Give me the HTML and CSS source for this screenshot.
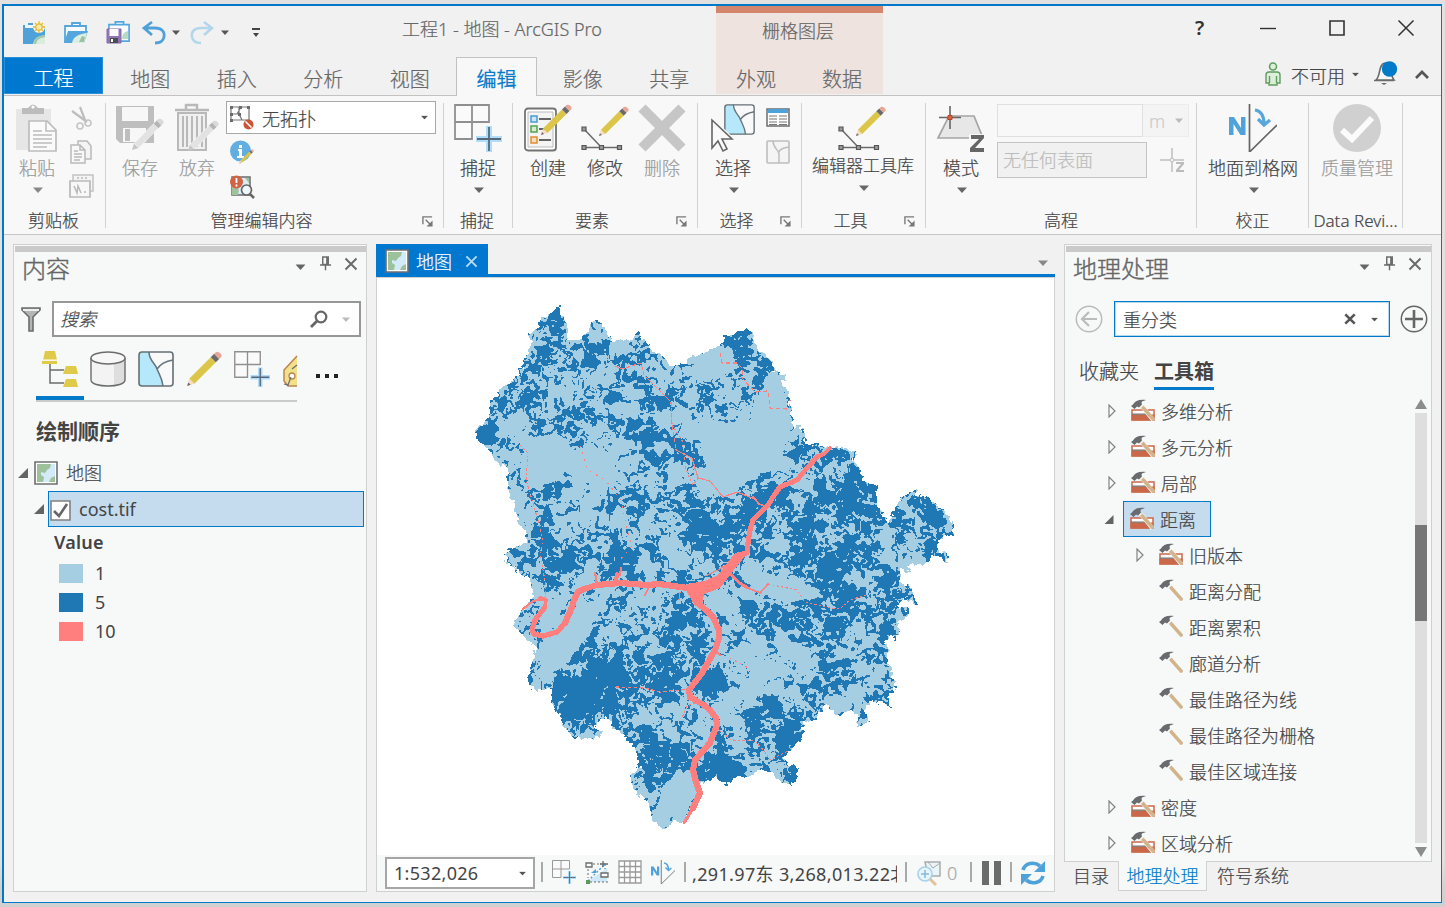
FILE: index.html
```html
<!DOCTYPE html>
<html lang="zh-CN">
<head>
<meta charset="utf-8">
<title>工程1 - 地图 - ArcGIS Pro</title>
<link rel="stylesheet" href="styles.css">
</head>
<body>
<svg class="defs" width="0" height="0" aria-hidden="true">
  <symbol id="down" viewBox="0 0 10 6"><path d="M0 .5h10L5 6z"/></symbol>
  <symbol id="pencil" viewBox="0 0 32 32">
    <path d="M1 31l2-6.500 4.500 4.500z" fill="#f6dcc4"/><path d="M1 31l1-3 2 2z" fill="#6a6a6a"/>
    <path d="M3 24.500L22 5.500l4.500 4.500L7.500 29z" fill="#dcc64a"/>
    <path d="M22 5.500l3-3L29.500 7l-3 3z" fill="#6a6a6a"/><path d="M25 2.500l1.500-1.500q2-1 4 1t.5 3.500L29.500 7z" fill="#e6a797"/>
  </symbol>
  <symbol id="greypencil" viewBox="0 0 32 32">
    <path d="M1 31l2-6.500 4.500 4.500z" fill="#c6c6c6"/><path d="M3 24.500L22 5.500l4.500 4.500L7.500 29z" fill="#e2e2e2" stroke="#f8f8f8" stroke-width=".6"/>
    <path d="M22 5.500l3-3L29.500 7l-3 3z" fill="#b5b5b5"/><path d="M25 2.500l1.500-1.500q2-1 4 1t.5 3.500L29.500 7z" fill="#d9d9d9"/>
  </symbol>
  <symbol id="snap" viewBox="0 0 48 48">
    <path d="M1 1h34v17H18v17H1zM18 1v17M1 18h17" fill="#fafafa" stroke="#8f8f8f" stroke-width="1.800"/>
    <path d="M35 22v26M22 35h26" stroke="#b0dcf8" stroke-width="6"/><path d="M35 23v24M23 35h24" stroke="#56697a" stroke-width="1.800"/>
  </symbol>
  <symbol id="mapicon" viewBox="0 0 24 24">
    <path d="M1 1h22v22H1z" fill="#fff" stroke="#6f6f6f" stroke-width="1.600"/><path d="M3 3h18v18H3z" fill="#9cc19b"/>
    <path d="M17 3h4v12l-4 2-2 4H9l1-5-3-2v-3l4 1 2-3 3-2z" fill="#d3eaf8"/>
  </symbol>
  <symbol id="partition" viewBox="0 0 36 36">
    <rect x="1" y="1" width="34" height="34" rx="3" fill="#f9f9f9"/>
    <path d="M4 1h7c0 9 9 13 10 21l4 13H4q-3 0-3-3V4q0-3 3-3z" fill="#b4e8fa"/>
    <path d="M11 1c0 9 7 12 8 17 3 7 5 9 6 17M19 18c4-6 10-8 16-9" fill="none" stroke="#69757c" stroke-width="1.600"/>
    <rect x="1" y="1" width="34" height="34" rx="3" fill="none" stroke="#666f74" stroke-width="1.600"/>
  </symbol>
  <symbol id="modify" viewBox="0 0 48 48">
    <path d="M3 25l17.500 18.500M3 43.500h35" stroke="#6a6a6a" stroke-width="1.500" fill="none"/>
    <path d="M1 23h4v4H1zM1 41.500h4v4H1zM18.500 41.500h4v4h-4zM36.500 41.500h4v4h-4z" fill="#999" stroke="#555" stroke-width="1.200"/>
    <use href="#pencil" x="17" y="2" width="31" height="31"/>
  </symbol>
  <symbol id="hammer" viewBox="0 0 24 24">
    <path d="M10 9l2.500-2.500L24 19.500q0 2.500-2.500 2.500z" fill="#d2b48c"/>
    <path d="M0 7l2-1.500C4 2 8 0 15 1l-4 1.500q-1 1 0 3l-3 3-2-1-2.500 2.500z" fill="#696c6e"/>
  </symbol>
  <symbol id="toolbox" viewBox="0 0 24 24">
    <path d="M1 11h22v10H1z" fill="#fff" stroke="#cb6849" stroke-width="1.500"/><path d="M.5 15.500h23V21.500H.5z" fill="#cb6849"/><path d="M1 14.500h18v1.300H1z" fill="#77706d"/>
    <path d="M8 7l5-1 11 14-3 3z" fill="#f6f1eb"/><use href="#hammer" width="24" height="24"/>
  </symbol>
  <symbol id="caseic" viewBox="0 0 24 24"><path d="M8 5V2h9v3M1 5h22v18H1z" fill="#f8fcff" stroke="#55a6dc" stroke-width="1.800"/></symbol>
  <symbol id="launch" viewBox="0 0 12 12"><path d="M1 9V1h10M4 4l6 6" fill="none" stroke="#777" stroke-width="1.500"/><path d="M11.500 5v6.500H5z" fill="#777"/></symbol>
  <symbol id="pin" viewBox="0 0 12 16"><path d="M3 1h6v8H3zM7.500 1v8M0 9.700h12M6 10v5.500" fill="none" stroke="#6b6b6b" stroke-width="1.600"/></symbol>
  <symbol id="cross" viewBox="0 0 14 14"><path d="M1.500 1.500l11 11M12.500 1.500l-11 11" stroke="currentColor" stroke-width="2"/></symbol>
  <symbol id="boldcross" viewBox="0 0 14 14"><path d="M1.500 1.500l11 11M12.500 1.500l-11 11" stroke="currentColor" stroke-width="3"/></symbol>
  <symbol id="northgrid" viewBox="0 0 48 48">
    <path d="M0 31V13h5l7 11V13h4.500v18h-5L4.500 20v11z" fill="#4fa3da"/><path d="M20.500 0v48L48 21" fill="none" stroke="#646464" stroke-width="1.700"/>
    <path d="M26 6c7 1 9 6 9 14M29 15l6 6 6-5" fill="none" stroke="#56a7dc" stroke-width="3.200"/>
  </symbol>
  <symbol id="closed" viewBox="0 0 8 14"><path d="M1 1v12l6-6z" fill="none" stroke="#828282" stroke-width="1.200"/></symbol>
  <symbol id="opened" viewBox="0 0 10 10"><path d="M10 0v10H0z" fill="#646464"/></symbol>
</svg>

<div class="window">
  <header class="titlebar">
    <div class="quick">
      <svg class="i24" viewBox="0 0 24 24"><path d="M1 4h5V2h5v3h12v18H1z" fill="#4ea2d9"/><path d="M3 4h8v3H3z" fill="#eef7fc"/><path d="M11 23q1-8 12-9v9z" fill="#d9ecdd"/><path d="M13 23c0-4 3-7 10-8" fill="none" stroke="#9fc6a6" stroke-width="2"/><circle cx="17" cy="6" r="6" fill="#fbf6df"/><path d="M17 0v12M11 6h12M13 2l8 8M21 2l-8 8" stroke="#dfba38" stroke-width="1.300"/><circle cx="17" cy="6" r="3.200" fill="#f8e9a8" stroke="#dfba38" stroke-width="1.200"/></svg>
      <svg class="i24" viewBox="0 0 24 24"><path d="M8 5V2h8v3M1 22V5h21v5" fill="#f5fbff" stroke="#55a6dc" stroke-width="1.800"/><path d="M4 10h20l-4 12H0z" fill="#55a6dc"/><path d="M8 22c1-6 6-9 15-10l-3 10z" fill="#dbeee2"/><path d="M15 21l3-6 3 1-1 5z" fill="#9cc1a0"/></svg>
      <svg class="i24" viewBox="0 0 24 24"><use href="#caseic" x="2" y="-1" width="22" height="22"/><path d="M16 18q0-7 6-8v8z" fill="#b9d9c0"/><path d="M1 8h14v14H1z" fill="#9175b6" stroke="#8469ad"/><path d="M3.500 8h9v7h-9z" fill="#fff"/><path d="M4 17h8v5H4z" fill="#4d4d4d"/><path d="M5 18h2v3H5z" fill="#fff"/></svg>
      <svg class="i24 undo" viewBox="0 0 24 24"><path d="M10 1L2 7l8 7M2 7h11c7 0 10 4 9 9s-5 6-9 6" fill="none" stroke="#4ea2d9" stroke-width="2.800"/></svg>
      <svg class="tiny" viewBox="0 0 10 6"><use href="#down"/></svg>
      <svg class="i24 redo" viewBox="0 0 24 24"><path d="M14 1l8 6-8 7M22 7H11C4 7 1 11 2 16s5 6 9 6" fill="none" stroke="#b3d6eb" stroke-width="2.600"/></svg>
      <svg class="tiny" viewBox="0 0 10 6"><use href="#down"/></svg>
      <svg class="custom" viewBox="0 0 8 9"><path d="M0 0h8v2H0zM1 5h6L4 9z" fill="#444"/></svg>
    </div>
    <div class="apptitle">工程1 - 地图 - ArcGIS Pro</div>
    <div class="context-title">栅格图层</div>
    <div class="sysbuttons">
      <span class="help">?</span>
      <svg width="16" height="16" viewBox="0 0 16 16"><path d="M0 8.500h16" stroke="#333" stroke-width="1.400"/></svg>
      <svg width="16" height="16" viewBox="0 0 16 16"><path d="M1 1h14v14H1z" fill="none" stroke="#333" stroke-width="1.600"/></svg>
      <svg width="16" height="16" viewBox="0 0 16 16"><path d="M.5.5l15 15m0-15l-15 15" stroke="#333" stroke-width="1.500"/></svg>
    </div>
  </header>
  <nav class="tabs">
    <a class="file">工程</a><a>地图</a><a>插入</a><a>分析</a><a>视图</a><a class="active">编辑</a><a>影像</a><a>共享</a>
    <div class="context"><a>外观</a><a>数据</a></div>
    <div class="account">
      <svg width="16" height="24" viewBox="0 0 16 24"><circle cx="8" cy="4.500" r="3.500" fill="#dcefd9" stroke="#5f9c5f" stroke-width="1.500"/><path d="M4 10h8q3 0 3 3v8H12v2H4v-2H1v-8q0-3 3-3zM4.500 14v7M11.500 14v7" fill="#dcefd9" stroke="#5f9c5f" stroke-width="1.400"/></svg>
      <span>不可用</span>
      <svg class="tiny" viewBox="0 0 10 6"><use href="#down"/></svg>
      <svg class="bell" width="24" height="24" viewBox="0 0 24 24"><path d="M2 19c5-4 2-16 9-17s5 13 9 17zM0 19.500h20" fill="#f7f7f7" stroke="#6b6b6b" stroke-width="1.600"/><path d="M7 22h6l-3 2z" fill="#6b6b6b"/><circle cx="15.500" cy="8" r="7.700" fill="#007ac9"/></svg>
      <svg width="14" height="9" viewBox="0 0 14 9"><path d="M1 8l6-6 6 6" fill="none" stroke="#555" stroke-width="2.700"/></svg>
    </div>
  </nav>

  <section class="ribbon">
    <div class="group g1">
      <div class="gbody">
        <div class="btn off"><svg class="i48" viewBox="0 0 48 48"><path d="M3 5h35v41H3z" fill="#e6e6e6"/><path d="M9 4h6q5-7 10 0h6v6H9z" fill="#bcbcbc"/><circle cx="20" cy="3" r="1.600" fill="#fff"/><path d="M16 17h18l9 9v21H16z" fill="#fafafa" stroke="#bcbcbc" stroke-width="1.700"/><path d="M33 17v10h10M20 27h9M20 31h19M20 35h19M20 39h19M20 43h14" fill="none" stroke="#bcbcbc" stroke-width="1.500"/></svg><span>粘贴</span><svg class="arr" viewBox="0 0 10 6"><use href="#down"/></svg></div>
        <div class="smalls">
          <svg class="i24" viewBox="0 0 24 24"><path d="M10 1l5 13M2 5l15 11" stroke="#bdbdbd" stroke-width="2.200"/><circle cx="18" cy="17" r="3" fill="none" stroke="#c4c4c4" stroke-width="1.600"/><circle cx="10" cy="20" r="3" fill="none" stroke="#c4c4c4" stroke-width="1.600"/></svg>
          <svg class="i24" viewBox="0 0 24 24"><path d="M8 1h9l4 5v13H8z" fill="#f4f4f4" stroke="#b9b9b9" stroke-width="1.500"/><path d="M1 5h9l5 5v13H1zM10 5v5h5M4 11h4M4 14h8M4 17h8M4 20h6" fill="#f8f8f8" stroke="#b9b9b9" stroke-width="1.500"/></svg>
          <svg class="i24" viewBox="0 0 24 24"><path d="M3 1h20v16H3z" fill="#f4f4f4" stroke="#c2c2c2" stroke-width="1.500"/><path d="M0 7h20v16H0z" fill="#f8f8f8" stroke="#b9b9b9" stroke-width="1.700"/><path d="M4 12l3 7 1-7 3 7M14 18h2M7 4h2m2 0h2m2 0h2" stroke="#b9b9b9" stroke-width="1.500" fill="none"/></svg>
        </div>
      </div>
      <div class="glabel"><span>剪贴板</span></div>
    </div>
    <div class="group g2">
      <div class="gbody">
        <div class="btn off"><svg class="i48" viewBox="0 0 48 48"><path d="M0 2h38v37H4l-4-4z" fill="#bebebe"/><path d="M6 3h26v14H6z" fill="#f7f7f7"/><path d="M7 24h23v14H7z" fill="#f7f7f7"/><path d="M9 25h5v12H9z" fill="#bebebe"/><use href="#greypencil" x="15" y="14" width="33" height="33"/></svg><span>保存</span></div>
        <div class="btn off"><svg class="i48" viewBox="0 0 48 48"><path d="M2 6h34M13 6V1h11v5" fill="none" stroke="#b9b9b9" stroke-width="2.500"/><path d="M5 9h28v37H5zM10 12v31M14 12v31M19 12v31M24 12v31M29 12v31" fill="#f0f0f0" stroke="#b9b9b9" stroke-width="2"/><use href="#greypencil" x="14" y="16" width="32" height="32"/></svg><span>放弃</span></div>
        <div class="manage">
          <div class="combo"><svg class="i24" viewBox="0 0 24 24"><path d="M1 1h18v13H1zM1 8h8M9 1v7l3 6M7 8l4-7" fill="#fff" stroke="#777" stroke-width="1.200"/><path d="M0 0h3v3H0zM9 0h3v3H9zM17 0h3v3h-3zM0 7h3v3H0zM0 13h3v3H0zM8 7h3v3H8z" fill="#6b6b6b"/><circle cx="18.500" cy="18.500" r="5" fill="#ca5535"/><path d="M15.500 15.500l6 6" stroke="#fff" stroke-width="1.500"/></svg><span>无拓扑</span><svg class="tiny" viewBox="0 0 10 6"><use href="#down"/></svg></div>
          <svg class="i24" viewBox="0 0 24 24"><circle cx="10.500" cy="11" r="10.500" fill="#62aee0"/><path d="M9 5h3v3H9zM8 9h4v7h2v2H7v-2h2v-5H8z" fill="#fff"/><use href="#pencil" x="9" y="9" width="15" height="15"/></svg>
          <svg class="i24" viewBox="0 0 24 24"><path d="M2 2h18v18H2z" fill="#d8edf6" stroke="#6b6b6b" stroke-width="1.500"/><path d="M2 8q9 3 6 12H2zM15 3h4v5z" fill="#9fc19c"/><circle cx="6.500" cy="7" r="6.500" fill="#cf6446"/><path d="M6.500 3v5M6.500 9.500v2" stroke="#fff" stroke-width="1.800"/><circle cx="16.500" cy="15" r="5" fill="#eef7fb" stroke="#666" stroke-width="1.700"/><path d="M20 19l4 4" stroke="#666" stroke-width="2.500"/></svg>
        </div>
      </div>
      <div class="glabel"><span>管理编辑内容</span><svg class="launch"><use href="#launch"/></svg></div>
    </div>
    <div class="group g3">
      <div class="gbody"><div class="btn"><svg class="i48"><use href="#snap"/></svg><span>捕捉</span><svg class="arr" viewBox="0 0 10 6"><use href="#down"/></svg></div></div>
      <div class="glabel"><span>捕捉</span></div>
    </div>
    <div class="group g4">
      <div class="gbody">
        <div class="btn"><svg class="i48" viewBox="0 0 48 48"><rect x="1" y="4.500" width="31" height="42" rx="3" fill="#fff" stroke="#737373" stroke-width="1.800"/><path d="M4 8h25v35H4z" fill="#f4f4f4" stroke="#bbb"/><path d="M15 15h12M15 25h12M15 36h12" stroke="#656565" stroke-width="2"/><path d="M7 12h6v6H7z" fill="#cde6f6" stroke="#479bd2" stroke-width="1.500"/><path d="M7 22h6v6H7z" fill="#d7ecd0" stroke="#53a353" stroke-width="1.500"/><path d="M7 33h6v6H7z" fill="#fbdfbd" stroke="#e38d35" stroke-width="1.500"/><use href="#pencil" x="16" y="0" width="32" height="32"/></svg><span>创建</span></div>
        <div class="btn"><svg class="i48"><use href="#modify"/></svg><span>修改</span></div>
        <div class="btn off"><svg class="i48" viewBox="0 0 48 48"><path d="M4 4l40 40M44 4L4 44" stroke="#c6c6c6" stroke-width="10"/></svg><span>删除</span></div>
      </div>
      <div class="glabel"><span>要素</span><svg class="launch"><use href="#launch"/></svg></div>
    </div>
    <div class="group g5">
      <div class="gbody">
        <div class="btn"><svg class="i48" viewBox="0 0 48 48"><use href="#partition" x="15" y="0" width="31" height="31"/><path d="M3 16v29l6-7 5 9 5-2-5-9h10z" fill="#fafafa" stroke="#f8f8f8" stroke-width="4"/><path d="M3 16v28l6-7 5 10 4-2-5-10h10z" fill="#fafafa" stroke="#666" stroke-width="1.600"/></svg><span>选择</span><svg class="arr" viewBox="0 0 10 6"><use href="#down"/></svg></div>
        <div class="smalls">
          <svg class="i24" viewBox="0 0 24 24"><path d="M1 3h22v17H1z" fill="#fff" stroke="#6b6b6b" stroke-width="1.500"/><path d="M2 3h20v4H2z" fill="#4ea2d9"/><path d="M3 10h8M13 10h8M3 13h8M13 13h8M3 16h8M13 16h8M3 18.500h8M13 18.500h8" stroke="#777" stroke-width="1.200"/></svg>
          <svg class="i24" viewBox="0 0 24 24"><rect x="1" y="1" width="22" height="22" rx="1" fill="#f4f4f4" stroke="#bdbdbd" stroke-width="1.600"/><path d="M7 1c0 7 6 9 6 13v9M12 13c3-5 6-5 11-6" fill="none" stroke="#bdbdbd" stroke-width="1.500"/></svg>
        </div>
      </div>
      <div class="glabel"><span>选择</span><svg class="launch"><use href="#launch"/></svg></div>
    </div>
    <div class="group g6">
      <div class="gbody"><div class="btn wide"><svg class="i48"><use href="#modify"/></svg><span>编辑器工具库</span><svg class="arr" viewBox="0 0 10 6"><use href="#down"/></svg></div></div>
      <div class="glabel"><span>工具</span><svg class="launch"><use href="#launch"/></svg></div>
    </div>
    <div class="group g7">
      <div class="gbody">
        <div class="btn"><svg class="i48" viewBox="0 0 48 48"><path d="M12 12h25l9 22H1z" fill="#e7e7e7" stroke="#a5a5a5" stroke-width="1.700"/><path d="M32 30h16v18H32z" fill="#f8f8f8"/><path d="M13 2v23M2 13.500h22" stroke="#666" stroke-width="1.600"/><path d="M11 11.500h4v4h-4z" fill="#db653e" stroke="#b94322"/><path d="M34 31h13v3L38 44h9v4H33v-4l9-9h-8z" fill="#666"/></svg><span>模式</span><svg class="arr" viewBox="0 0 10 6"><use href="#down"/></svg></div>
        <div class="fields">
          <div class="frow"><div class="f1"></div><div class="unit"><span>m</span><svg class="tiny" viewBox="0 0 10 6"><use href="#down"/></svg></div></div>
          <div class="frow"><div class="f2">无任何表面</div><svg class="i24" viewBox="0 0 24 24"><path d="M12 0v24M0 12h24" stroke="#bfbfbf" stroke-width="1.500"/><circle cx="12" cy="12" r="2" fill="#eee" stroke="#bfbfbf"/><path d="M15 13h10v12H15z" fill="#f8f8f8"/><path d="M16 14h8v2l-5 6h5v2h-8v-2l5-6h-5z" fill="#bbb"/></svg></div>
        </div>
      </div>
      <div class="glabel"><span>高程</span></div>
    </div>
    <div class="group g8">
      <div class="gbody"><div class="btn"><svg class="i48"><use href="#northgrid"/></svg><span>地面到格网</span><svg class="arr" viewBox="0 0 10 6"><use href="#down"/></svg></div></div>
      <div class="glabel"><span>校正</span></div>
    </div>
    <div class="group g9">
      <div class="gbody"><div class="btn off"><svg class="i48" viewBox="0 0 48 48"><circle cx="24" cy="24" r="24" fill="#d0d0d0"/><path d="M9 26l10 9L39 14" fill="none" stroke="#fbfbfb" stroke-width="6"/></svg><span>质量管理</span></div></div>
      <div class="glabel"><span>Data Revi...</span></div>
    </div>
  </section>

  <main class="work">
    <aside class="pane contents">
      <div class="grip"></div>
      <div class="phead"><h2>内容</h2><svg class="arr" viewBox="0 0 10 6"><use href="#down"/></svg><svg class="pin"><use href="#pin"/></svg><svg class="x"><use href="#cross"/></svg></div>
      <div class="searchrow">
        <svg width="20" height="25" viewBox="0 0 20 25"><path d="M1 1h18v2l-7 7v14H8V10L1 3z" fill="#b5b5b5" stroke="#6b6b6b" stroke-width="1.600"/><path d="M2 2h16v2H2z" fill="#eee"/></svg>
        <div class="search"><em>搜索</em><svg width="18" height="18" viewBox="0 0 18 18"><circle cx="11" cy="7" r="5.300" fill="none" stroke="#666" stroke-width="2.200"/><path d="M7 11l-6 6" stroke="#666" stroke-width="2.800"/></svg><svg class="tiny" viewBox="0 0 10 6"><use href="#down"/></svg></div>
      </div>
      <div class="views">
        <div class="viewlist">
          <svg viewBox="0 0 36 36"><path d="M8 13v19h14M8 19h14" fill="none" stroke="#6b6b6b" stroke-width="1.500"/><path d="M3 0h10l2 9H1zM0 10h15v3H0zM24 15h10l2 8H21zM24 28h10l2 8H21z" fill="#dfca4a"/><path d="M1 9h14" stroke="#faf6d8" stroke-width="1.200"/></svg>
          <svg viewBox="0 0 36 36"><path d="M1 7v22c0 8 34 8 34 0V7z" fill="#f3f3f3"/><path d="M24 12l11-4v21q0 4-11 6z" fill="#dedede"/><path d="M1 7v22c0 8 34 8 34 0V7" fill="none" stroke="#6b6b6b" stroke-width="1.400"/><ellipse cx="18" cy="7" rx="17" ry="6" fill="#f7f7f7" stroke="#6b6b6b" stroke-width="1.400"/></svg>
          <svg><use href="#partition"/></svg>
          <svg><use href="#pencil"/></svg>
          <svg><use href="#snap"/></svg>
          <svg class="half" viewBox="0 0 15 36"><path d="M15 5L2 19v11l4 5h9" fill="#f2e18a" stroke="#b98552" stroke-width="1.500"/><circle cx="10" cy="25" r="3" fill="#fff" stroke="#b98552" stroke-width="1.300"/><path d="M9 26l-3 8-4-1M10 18l5-4" fill="none" stroke="#6b6b6b" stroke-width="1.200"/></svg>
        </div>
        <svg class="dots" viewBox="0 0 24 4"><path d="M0 0h4v4H0zM9 0h4v4H9zM18 0h4v4h-4z" fill="#222"/></svg>
      </div>
      <h3>绘制顺序</h3>
      <div class="trow map"><svg class="tri"><use href="#opened"/></svg><svg class="i24"><use href="#mapicon"/></svg><span>地图</span></div>
      <div class="trow layer"><svg class="tri"><use href="#opened"/></svg><div class="sel"><svg width="21" height="21" viewBox="0 0 21 21"><path d="M1 1h19v19H1z" fill="#fff" stroke="#818181" stroke-width="1.600"/><path d="M4 11l5 5 8-12" fill="none" stroke="#666" stroke-width="2.600"/></svg><span>cost.tif</span></div></div>
      <div class="value">Value</div>
      <div class="legend"><i class="c1"></i>1</div>
      <div class="legend"><i class="c5"></i>5</div>
      <div class="legend"><i class="c10"></i>10</div>
    </aside>

    <section class="view">
      <div class="viewtabs"><div class="vtab"><svg class="i24"><use href="#mapicon"/></svg><span>地图</span><svg class="x"><use href="#cross"/></svg></div><svg class="arr" viewBox="0 0 10 6"><use href="#down"/></svg></div>
      <div class="frame">
        <canvas id="map" width="677" height="577"></canvas>
        <div class="status">
          <div class="scale"><span>1:532,026</span><svg class="tiny" viewBox="0 0 10 6"><use href="#down"/></svg></div>
          <b></b>
          <svg class="i24"><use href="#snap"/></svg>
          <svg class="i24" viewBox="0 0 24 24"><path d="M2 22L22 8v14z" fill="#cfe8f8"/><path d="M3 21L20 4M20 4h-5M20 4v5" stroke="#4ea2d9" stroke-width="1.500" stroke-dasharray="2 2"/><path d="M1 3h6v4H1zM18 1v6M15 4h8M16 13h7v4h-7z" fill="#fff" stroke="#6b6b6b" stroke-width="1.300"/><path d="M8 4h6M3 9v9M5 22h18" stroke="#6b6b6b" stroke-dasharray="2 2"/><path d="M1 20h4v4H1z" fill="#5a9b5a"/><path d="M6 13l5-4v4z" fill="#4ea2d9"/></svg>
          <svg class="i24" viewBox="0 0 24 24"><path d="M1 1h22v22H1zM1 6.500h22M1 12h22M1 17.500h22M6.500 1v22M12 1v22M17.500 1v22" fill="#fff" stroke="#9a9a9a" stroke-width="1.300"/></svg>
          <svg class="i24"><use href="#northgrid"/></svg>
          <b></b>
          <div class="coords">,291.97东 3,268,013.22北</div>
          <b></b>
          <div class="selected"><svg class="i24" viewBox="0 0 24 24"><path d="M8 1h15v14H11z" fill="#eaf5f8" stroke="#aaa" stroke-width="1.500"/><path d="M11 1l5 6 7-5" fill="none" stroke="#aaa"/><circle cx="8" cy="13" r="7" fill="#e7f5fc" stroke="#a8d1eb" stroke-width="1.600"/><path d="M8 9v8M4 13h8" stroke="#8bb9d6" stroke-width="1.500"/><path d="M13 18l6 6" stroke="#dfc39d" stroke-width="3"/></svg><span>0</span></div>
          <b></b>
          <svg class="pause" viewBox="0 0 19 24"><path d="M0 0h7v24H0zM12 0h7v24h-7z" fill="#6b6b6b"/></svg>
          <b></b>
          <svg class="i24" viewBox="0 0 24 24"><path d="M2 9C4 2 13 0 19 5M22 15C20 22 11 24 5 19" fill="none" stroke="#4ea2d9" stroke-width="3.600"/><path d="M24 0v11H13zM0 24V13h11z" fill="#4ea2d9"/></svg>
        </div>
      </div>
    </section>

    <aside class="geo">
      <div class="pane">
        <div class="grip"></div>
        <div class="phead"><h2>地理处理</h2><svg class="arr" viewBox="0 0 10 6"><use href="#down"/></svg><svg class="pin"><use href="#pin"/></svg><svg class="x"><use href="#cross"/></svg></div>
        <div class="findrow">
          <svg class="round" viewBox="0 0 28 28"><circle cx="14" cy="14" r="12.700" fill="none" stroke="#bbb" stroke-width="1.500"/><path d="M22 14H8M14 7l-7 7 7 7" fill="none" stroke="#bbb" stroke-width="2.200"/></svg>
          <div class="find"><span>重分类</span><svg class="fx"><use href="#boldcross"/></svg><svg class="tiny" viewBox="0 0 10 6"><use href="#down"/></svg></div>
          <svg class="round" viewBox="0 0 28 28"><circle cx="14" cy="14" r="12.700" fill="none" stroke="#666" stroke-width="1.500"/><path d="M14 5v18M5 14h18" stroke="#666" stroke-width="2.600"/></svg>
        </div>
        <div class="gtabs"><span>收藏夹</span><strong>工具箱</strong></div>
        <div class="treewrap">
          <div class="tree">
            <div class="node"><svg class="cl"><use href="#closed"/></svg><p><svg class="i24"><use href="#toolbox"/></svg>多维分析</p></div>
            <div class="node"><svg class="cl"><use href="#closed"/></svg><p><svg class="i24"><use href="#toolbox"/></svg>多元分析</p></div>
            <div class="node"><svg class="cl"><use href="#closed"/></svg><p><svg class="i24"><use href="#toolbox"/></svg>局部</p></div>
            <div class="node"><svg class="tri"><use href="#opened"/></svg><p class="picked"><svg class="i24"><use href="#toolbox"/></svg>距离</p></div>
            <div class="node sub"><svg class="cl"><use href="#closed"/></svg><p><svg class="i24"><use href="#toolbox"/></svg>旧版本</p></div>
            <div class="node tool"><p><svg class="i24"><use href="#hammer"/></svg>距离分配</p></div>
            <div class="node tool"><p><svg class="i24"><use href="#hammer"/></svg>距离累积</p></div>
            <div class="node tool"><p><svg class="i24"><use href="#hammer"/></svg>廊道分析</p></div>
            <div class="node tool"><p><svg class="i24"><use href="#hammer"/></svg>最佳路径为线</p></div>
            <div class="node tool"><p><svg class="i24"><use href="#hammer"/></svg>最佳路径为栅格</p></div>
            <div class="node tool"><p><svg class="i24"><use href="#hammer"/></svg>最佳区域连接</p></div>
            <div class="node"><svg class="cl"><use href="#closed"/></svg><p><svg class="i24"><use href="#toolbox"/></svg>密度</p></div>
            <div class="node"><svg class="cl"><use href="#closed"/></svg><p><svg class="i24"><use href="#toolbox"/></svg>区域分析</p></div>
          </div>
          <div class="scroll"><svg viewBox="0 0 12 10"><path d="M6 0l6 10H0z" fill="#8c8c8c"/></svg><div class="track"><div class="thumb"></div></div><svg viewBox="0 0 12 10"><path d="M0 0h12L6 10z" fill="#8c8c8c"/></svg></div>
        </div>
      </div>
      <div class="docktabs"><span>目录</span><span class="on">地理处理</span><span>符号系统</span></div>
    </aside>
  </main>
</div>
<script src="map.js"></script>
</body>
</html>
```

FILE: styles.css
```css
* { box-sizing: border-box; }
body {
  margin: 0; padding: 4px 3px 4px 2px; width: 1445px; height: 907px; overflow: hidden;
  background: linear-gradient(#e3e1e0 0, #e3e1e0 860px, #d0d0d0 890px);
  font: 300 18px "Noto Sans", "Noto Sans CJK SC", sans-serif; color: #444;
  -webkit-text-stroke: .2px currentColor;
}
svg { display: block; flex: none; overflow: visible; }
.defs { position: absolute; }
.window { width: 1440px; height: 899px; border: 2px solid #0079cb; border-width: 2px 1px 1px 2px; background: #f1f1f1; display: flex; flex-direction: column; }
.i24 { width: 24px; height: 24px; }
.i48 { width: 48px; height: 48px; }
.tiny { width: 8px; height: 5px; fill: #555; }
.arr { width: 10px; height: 6px; fill: #666; }
h2, h3, p { margin: 0; font-weight: 300; }

.titlebar { height: 51px; display: flex; flex: none; color: #666; }
.quick { width: 398px; display: flex; align-items: center; padding: 2px 0 0 18px; gap: 18px; }
.quick .undo { margin-left: -6px; }
.quick .undo + .tiny, .quick .redo + .tiny { margin-left: -12px; }
.quick .redo { margin-left: -8px; }
.quick .redo + .tiny { margin-left: -11px; }
.quick .custom { width: 8px; height: 9px; margin-left: 5px; }
.apptitle { width: 314px; line-height: 47px; white-space: nowrap; }
.context-title { width: 167px; border-top: 7px solid #d4866d; background: #eee3df; text-align: center; line-height: 37px; padding-right: 3px; }
.sysbuttons { margin-left: auto; display: flex; align-items: center; padding: 0 27px 7px 0; gap: 53px; }
.help { font: 600 20px/24px "Noto Sans", sans-serif; color: #333; width: 10px; -webkit-text-stroke: 0; margin-right: 2px; }

.tabs { height: 39px; flex: none; display: flex; border-bottom: 1px solid #c2c2c2; font-size: 20px; color: #666; }
.tabs a { width: 86.500px; text-align: center; line-height: 45px; height: 38px; }
.tabs .file { width: 99px; background: #0078d0; color: #fff; margin-right: 4px; height: 37px; border: 1px solid #2a90d8; line-height: 41px; }
.tabs .active { width: 81px; margin: 0 2.500px 0 3px; background: #f8f8f8; border: 1px solid #c2c2c2; border-bottom: 0; height: 39px; line-height: 43px; color: #0079cb; -webkit-text-stroke: .45px currentColor; }
.context { margin-left: 3px; width: 167px; height: 37px; background: #eee3df; display: flex; justify-content: center; }
.context a { width: 86px; flex: none; }
.account { margin-left: auto; padding: 0 12px 4px 0; display: flex; align-items: center; font-size: 18px; color: #444; }
.account span { margin: 2px 7px 0 10px; }
.account .tiny { width: 7px; margin-right: 15px; }
.account .bell { margin-right: 17px; margin-top: -2px; }

.ribbon { height: 139px; flex: none; display: flex; padding-top: 7px; background: #f8f8f8; border-bottom: 1px solid #c6c6c6; }
.group { height: 125px; border-right: 1px solid #d2d2d2; flex: none; }
.gbody { height: 106px; display: flex; align-items: flex-start; }
.glabel { height: 19px; line-height: 24px; font-size: 17px; display: flex; color: #444; }
.glabel span { flex: 1; text-align: center; white-space: nowrap; }
.glabel:has(.launch) span { padding-right: 5px; }
.launch { width: 11px; height: 11px; margin: 7px 10px 0 0; }
.btn { display: flex; flex-direction: column; align-items: center; padding-top: 1px; flex: none; }
.btn span { line-height: 24px; margin-top: 4px; white-space: nowrap; }
.btn .arr { margin: 7px 0 0 1px; }
.off { color: #9b9b9b; }
.off .arr { fill: #888; }
.smalls { display: flex; flex-direction: column; gap: 10px; padding-top: 3px; }
.g1 { width: 102px; padding-left: 12px; } .g1 .btn { width: 42px; } .g1 .smalls { margin-left: 12px; } .g1 .glabel { margin: 0 2px 0 -12px; }
.g2 { width: 338px; } .g2 .gbody { padding-left: 10px; } .g2 .btn { width: 48px; } .g2 .btn + .btn { margin-left: 9px; }
.manage { margin: -2px 0 0 5px; }
.manage > svg { margin: 6px 0 0 4px; } .manage > svg + svg { margin-top: 11px; }
.combo { width: 210px; height: 33px; border: 1px solid #a8a8a8; background: #fff; display: flex; align-items: center; padding: 0 7px 0 3px; }
.combo span { flex: 1; padding-left: 8px; }
.combo .tiny { width: 7px; }
.g3 { width: 69px; } .g3 .gbody { padding-left: 10px; } .g3 .glabel { margin-right: 2px; }
.g4 { width: 185px; } .g4 .gbody { padding-left: 11px; gap: 9px; }
.g5 { width: 104px; } .g5 .gbody { padding-left: 11px; gap: 9px; }
.g6 { width: 124px; } .g6 .gbody { padding-left: 10px; } .wide { width: 102px; font-size: 17px; } .wide .i48 { margin-left: -2px; } .wide span { margin-top: 2px; }
.g7 { width: 271px; } .g7 .gbody { padding-left: 11px; gap: 12px; }
.g8 { width: 112px; } .g8 .gbody { padding-left: 11px; }
.g9 { width: 94px; } .g9 .gbody { padding-left: 12px; }
.fields { padding-top: 1px; display: flex; flex-direction: column; gap: 5px; }
.frow { display: flex; align-items: center; }
.f1 { width: 146px; height: 33px; border: 1px solid #e0e0e0; }
.unit { width: 46px; height: 33px; background: #f4f4f4; border: 1px solid #ececec; border-left: 0; display: flex; align-items: center; justify-content: space-between; padding: 0 5px 0 6px; color: #ccc; }
.unit .tiny { fill: #bbb; }
.f2 { width: 150px; height: 36px; border: 1px solid #c4c4c4; background: #f1f1f1; color: #bbb; line-height: 35px; padding-left: 5px; margin-right: 13px; }

.work { flex: 1; display: flex; padding: 9px 9px 10px; }
.pane { background: #f7f9f9; border: 1px solid #d0d0d0; display: flex; flex-direction: column; }
.grip { height: 6px; flex: none; margin: 1px 0 0 1px; background: #cacaca; }
.contents { width: 354px; height: 648px; }
.phead { display: flex; align-items: flex-start; height: 49px; flex: none; padding: 0 8px; color: #666; }
.phead h2 { font-size: 24px; line-height: 33px; flex: 1; -webkit-text-stroke: .4px currentColor; }
.phead .arr { margin: 12px 14px 0 0; width: 11px; }
.pin { width: 11px; height: 15px; margin: 4px 13px 0 0; }
.x { width: 14px; height: 14px; margin-top: 5px; color: #6b6b6b; }
.searchrow { display: flex; height: 36px; align-items: center; padding-left: 7px; gap: 11px; flex: none; }
.search { width: 309px; height: 36px; border: 2px solid #979797; background: #fff; display: flex; align-items: center; padding: 0 9px 0 6px; }
.search em { flex: 1; margin-top: -2px; }
.search .tiny { margin-left: 14px; fill: #bbb; }
.views { display: flex; padding: 14px 0 0 22px; flex: none; height: 65px; }
.viewlist { width: 261px; height: 51px; border-bottom: 2px solid #cacaca; display: flex; gap: 12px; padding-left: 6px; background: linear-gradient(#007ac9, #007ac9) 0 45px / 48px 4px no-repeat; }
.viewlist svg { width: 36px; height: 36px; }
.viewlist .half { width: 15px; }
.dots { width: 24px; height: 4px; margin: 23px 0 0 19px; }
.contents h3 { font-size: 21px; line-height: 30px; font-weight: 700; padding-left: 22px; margin-top: 14px; -webkit-text-stroke: 0; }
.trow { height: 36px; display: flex; align-items: center; flex: none; }
.tri { width: 10px; height: 10px; }
.trow.map { margin-top: 9px; padding-left: 4px; } .trow.map .i24 { margin: 0 8px 0 6px; } .trow.map span { margin-top: -2px; }
.layer { padding-left: 20px; font-weight: 400; -webkit-text-stroke: 0; }
.sel { margin-left: 4px; width: 316px; height: 36px; border: 1px solid #007ac9; background: #c5dbee; display: flex; align-items: center; padding-left: 1px; gap: 8px; }
.sel svg { margin-top: 2px; }
.value { font-weight: 600; line-height: 30px; padding-left: 40px; -webkit-text-stroke: 0; letter-spacing: .2px; }
.legend { height: 29px; line-height: 29px; display: flex; align-items: center; padding-left: 45px; gap: 12px; font-weight: 400; -webkit-text-stroke: 0; margin-top: 2px; margin-bottom: -2px; flex: none; }
.legend i { width: 24px; height: 19px; }
.c1 { background: #a6cee3; } .c5 { background: #1f78b4; } .c10 { background: #ff7f7f; }

.view { width: 679px; height: 648px; margin-left: 9px; display: flex; flex-direction: column; }
.viewtabs { height: 33px; border-bottom: 3px solid #0078d0; display: flex; justify-content: space-between; }
.viewtabs > .arr { width: 12px; height: 6px; fill: #888; margin: 16px 6px 0 0; }
.vtab { width: 112px; background: #0078d0; color: #fff; display: flex; align-items: center; padding: 4px 0 0 9px; gap: 7px; }
.vtab .x { width: 13px; height: 13px; color: #b8dcf5; margin: 0 0 0 6px; }
.frame { height: 615px; border: 1px solid #d0d0d0; background: #fff; display: flex; flex-direction: column; }
#map { display: block; width: 677px; height: 577px; }
.status { height: 36px; background: #f7f8f8; display: flex; align-items: center; padding-left: 8px; }
.status b { width: 2px; height: 20px; background: #a9a9a9; margin-top: -2px; flex: none; }
.scale { width: 150px; height: 32px; border: 2px solid #a6a6a6; background: #fff; display: flex; align-items: center; justify-content: space-between; padding: 0 7px; font-weight: 400; -webkit-text-stroke: 0; letter-spacing: .3px; margin-right: 6px; }
.scale .tiny { width: 7px; }
.status b:nth-of-type(1) { margin-right: 9px; } .status > .i24 { margin-right: 9px; margin-top: -2px; }
.status b:nth-of-type(2) { margin-right: 6px; }
.coords { width: 205px; overflow: hidden; white-space: nowrap; font-weight: 400; -webkit-text-stroke: 0; letter-spacing: .35px; margin-right: 8px; }
.selected { display: flex; gap: 6px; width: 50px; margin: 0 3px 0 10px; color: #aaa; align-items: center; }
.pause { width: 19px; height: 24px; margin: 0 9px 0 10px; }
.status > .i24:last-child { margin: 0 0 0 9px; }

.geo { width: 368px; margin-left: 9px; }
.geo .pane { height: 618px; }
.geo .phead { padding-right: 9px; }
.findrow { display: flex; height: 36px; padding-left: 10px; gap: 11px; align-items: center; }
.round { width: 28px; height: 28px; }
.round:last-child { margin-left: -1px; }
.find { width: 276px; height: 36px; border: 1px solid #007ac9; box-shadow: inset 0 0 0 1px #b5d9ee; background: #fff; display: flex; align-items: center; padding: 0 11px 0 8px; }
.find span { flex: 1; }
.fx { width: 12px; height: 12px; color: #555; margin-right: 15px; }
.find .tiny { width: 7px; }
.gtabs { height: 56px; flex: none; padding: 20px 0 0 14px; display: flex; gap: 15px; font-size: 20px; line-height: 30px; }
.gtabs strong { font-weight: 700; height: 33px; border-bottom: 3px solid #007ac9; -webkit-text-stroke: 0; }
.treewrap { height: 467px; display: flex; overflow: hidden; justify-content: space-between; }
.node { height: 36px; display: flex; align-items: center; padding-left: 43px; white-space: nowrap; }
.node p { height: 36px; display: flex; align-items: center; gap: 6px; padding: 0 7px 0 6px; border: 1px solid transparent; }
.cl { width: 8px; height: 14px; margin-right: 8px; }
.node .tri { margin: 0 9px 0 -4px; height: 9px; }
.node .picked { border-color: #007ac9; background: #c5dbee; padding-right: 14px; }
.sub { padding-left: 71px; } .tool { padding-left: 87px; }
.scroll { width: 12px; margin: 6px 4px 3px 0; display: flex; flex-direction: column; justify-content: space-between; }
.scroll svg { width: 12px; height: 10px; }
.track { height: 430px; background: #dedede; padding-top: 112px; }
.thumb { height: 96px; background: #777; }
.docktabs { display: flex; padding-left: 9px; line-height: 28px; height: 30px; }
.docktabs .on { width: 89px; height: 30px; margin: -1px 10px 0 9px; border: 1px solid #d0d0d0; border-top: 0; background: #f7f9f9; color: #0079cb; text-align: center; line-height: 30px; }
```

FILE: map.js
```js
// Land-cover cost raster: class 1 and 5 patches inside the region, class 10 rivers on top.
const cv = document.getElementById('map'), W = cv.width, H = cv.height, OX = 377, OY = 278;
const ctx = cv.getContext('2d');
const outline = [557,306,552,311,547,316,537,322,538,328,534,333,527,333,531,342,526,358,517,378,502,388,491,402,489,417,477,428,475,440,487,447,497,463,507,468,507,493,512,497,517,518,520,527,527,533,527,541,507,550,505,562,520,572,528,578,533,598,518,617,512,624,523,637,535,647,534,657,531,667,527,680,535,691,551,690,552,703,560,715,565,728,575,738,598,738,602,730,595,728,602,718,610,717,614,728,623,735,635,747,640,767,632,777,633,790,648,800,652,820,664,828,673,822,684,822,700,797,698,785,702,783,713,777,720,783,730,784,735,777,750,778,758,770,770,772,780,782,793,784,798,778,797,768,787,765,784,757,795,747,802,737,804,723,817,718,823,707,827,705,835,715,850,711,857,713,858,720,857,726,870,722,862,712,873,700,890,707,887,697,893,692,898,682,891,675,888,653,884,640,893,635,895,643,900,628,897,622,909,617,907,608,898,606,903,598,917,607,916,600,912,587,900,583,900,568,910,573,908,566,927,563,933,555,947,562,948,553,938,552,937,542,953,533,950,518,945,512,927,498,915,494,917,490,908,492,902,498,888,523,877,503,877,485,862,480,860,469,853,458,857,452,843,447,830,448,822,446,805,443,803,428,795,427,790,412,790,395,783,385,784,375,773,370,772,360,758,350,752,332,743,329,735,333,723,338,720,345,703,352,690,358,680,365,672,365,660,353,652,350,648,343,637,332,630,341,612,341,608,335,600,322,592,322,588,333,578,341,568,338,567,323,562,318,560,307];
function layer(draw) {
  const c = document.createElement('canvas'); c.width = W; c.height = H;
  const g = c.getContext('2d'); g.translate(-OX, -OY); g.lineJoin = g.lineCap = 'round'; draw(g);
  return g.getImageData(0, 0, W, H).data;
}
function trace(g, p) { g.beginPath(); for (let i = 0; i < p.length; i += 2) g.lineTo(p[i], p[i + 1]); }
function hash(x, y, s) { let h = (x * 374761393 + y * 668265263 + s * 974711) | 0; h = Math.imul(h ^ (h >>> 13), 1274126177); return ((h ^ (h >>> 16)) >>> 0) / 4294967296; }
function noise(x, y, s) {
  const a = Math.floor(x), b = Math.floor(y); let u = x - a, v = y - b; u = u * u * (3 - 2 * u); v = v * v * (3 - 2 * v);
  const p = hash(a, b, s), q = hash(a + 1, b, s), r = hash(a, b + 1, s), t = hash(a + 1, b + 1, s);
  return p + (q - p) * u + (r - p) * v + (p - q - r + t) * u * v;
}
const mask = layer(g => { trace(g, outline); g.fill(); });
const open = layer(g => {
  trace(g, [696,425,790,415,792,425,787,445,770,470,745,484,724,494,700,500,690,470,706,466]); g.fill();
  trace(g, [765,378,774,370,785,380,789,412,792,425,757,425]); g.fill();
  trace(g, [690,358,722,346,734,354,738,368,725,375,700,382]); g.fill();
  trace(g, [578,603,600,600,590,635,565,665,540,682,540,642]); g.fill();
  trace(g, [703,596,722,590,733,604,724,618,706,608]); g.fill();
  trace(g, [678,770,693,772,697,790,686,818,655,820,660,790]); g.fill();
  trace(g, [540,605,566,598,558,626,539,629]); g.fill();
  trace(g, [748,553,762,572,800,580,820,590,815,600,780,602,755,590,737,575]); g.fill();
});
const rivers = layer(g => {
  g.strokeStyle = g.fillStyle = '#f00';
  const s = (w, p, d) => { g.lineWidth = w; g.setLineDash(d || []); trace(g, p); g.stroke(); };
  s(4, [830,448,825,453,817,457,807,468,797,480]);
  s(5, [817,457,807,468,797,480,780,487,775,494,768,505,753,520,750,530,748,543,747,553]);
  trace(g, [750,550,735,553,718,575,705,581,687,584,687,592,694,604,702,604,704,594,720,588,733,571]); g.fill();
  s(6, [710,583,687,588,660,584,647,585,620,583,597,585,584,589,578,592,574,600,572,607,565,623]);
  s(5, [565,623,557,632,543,636,534,634,532,630,535,620,545,607]); s(3.500, [545,607,546,600,540,598]);
  s(2, [542,599,533,601,523,609]);
  s(6, [697,592,697,603,706,610,713,617,719,630,719,638,715,650,702,673,689,690,690,697,695,700,704,705,710,710,716,718,717,725,710,743,695,760,693,770,696,782,700,793,693,808]);
  s(3, [693,808,684,823]); s(3, [730,574,741,584,748,588]); s(1.500, [748,588,760,593,768,584]);
  s(4, [616,581,617,574]); s(2, [597,584,595,573]); s(2, [620,575,621,568]); s(2, [648,589,645,595]); s(2, [715,650,720,655]);
  s(1.200, [705,576,718,570,731,562]); s(1.200, [680,592,679,600]);
  const d = [2, 3, 1, 3];
  s(1.050, [520,445,528,453,526,480,532,500,539,523,543,540,540,555,546,585,545,598], d);
  s(1.050, [615,366,622,369,641,363,644,375,659,390,671,402,672,425,676,450], [4, 2]);
  s(1.100, [676,450,692,458,698,478,710,481,723,497,737,492,757,500], [7, 1]);
  s(1.800, [753,497,759,504,768,507]); s(1.050, [672,425,682,440,686,470,693,485,698,478], d);
  s(1.050, [720,353,722,363,737,363,743,369,742,378,755,392,768,391,770,408,789,409,790,400], [4, 3]);
  s(1.050, [580,446,588,470,605,480,621,500,627,530,632,546,620,560], [1, 6]);
  s(1.050, [768,584,797,590,805,602,830,608,840,609,850,600,867,595], d);
  s(1.050, [616,687,645,688,660,692,690,689], [3, 3]); s(1.050, [695,703,687,706,682,718], d);
  s(1.050, [719,730,731,740,755,741,765,752,770,760,790,750], d); s(1.050, [730,658,748,668], [1, 5]);
});
// Local density of class 5: x, y, radius, shift.
const bias = [[575,700,30,.24],[605,665,30,.15],[570,470,42,-.13],[600,465,30,-.15],[640,480,18,-.08],[640,448,26,.12],[555,385,28,-.07],[540,350,28,.1],[620,350,30,.07],[585,405,20,.07],[485,437,10,.25],[500,400,14,.08],[530,450,25,-.12],[545,417,14,.12],[555,510,28,.06],[620,395,35,.04],[700,530,28,.1],[715,430,12,-.1],[815,565,26,.2],[870,530,22,.14],[855,495,20,.2],[755,525,16,.12],[755,620,18,.13],[695,640,22,.1],[712,680,16,.25],[640,665,20,.12],[558,567,14,.15],[625,558,20,.1],[575,597,16,-.05],[680,560,20,-.1],[650,570,24,-.06],[680,620,12,.15],[770,680,38,-.1],[730,710,18,-.2],[740,660,20,-.06],[810,660,30,-.06],[860,690,24,-.06],[755,716,20,.13],[790,735,20,.16],[665,750,26,.08],[725,770,16,.25],[790,768,14,.05],[765,758,14,-.1],[590,723,13,-.2],[760,410,24,-.15],[740,336,12,.2],[720,405,22,-.04],[935,515,20,.04],[800,505,22,.05],[800,475,14,-.1],[650,620,18,-.04],[830,610,35,.03],[900,550,20,-.05],[690,380,20,-.1],[550,660,18,-.1],[660,805,18,-.08],[740,565,12,.08],[775,540,14,-.12],[650,710,26,-.05],[785,610,20,-.03],[840,710,20,-.1]];
const img = ctx.createImageData(W, H);
for (let y = 0; y < H; y++) for (let x = 0; x < W; x++) {
  const jx = Math.round((noise(x / 3, y / 3, 1) - .5) * 5), jy = Math.round((noise(x / 3, y / 3, 2) - .5) * 5);
  const k = ((y + jy) * W + x + jx) * 4 + 3, i = (y * W + x) * 4;
  let c = null;
  if (mask[k] > 128) {
    const px = x + OX, py = y + OY, wx = x + (noise(x / 6, y / 6, 3) - .5) * 13, wy = y + (noise(x / 6, y / 6, 4) - .5) * 13;
    let n = noise(wx / 15, wy / 15, 5) * .25 + noise(wx / 6.500, wy / 6.500, 6) * .38 + noise(wx / 3.200, wy / 3.200, 7) * .25 + noise(x / 1.900, y / 1.900, 8) * .12 - .525;
    for (const b of bias) { const d = ((px - b[0]) ** 2 + (py - b[1]) ** 2) / (b[2] * b[2]); if (d < 4) n += b[3] * Math.exp(-d * 1.200); }
    if (px > 690 && py > 450) n += .02;
    if (open[k] > 128) n -= .5;
    c = n > 0 ? [31, 120, 180] : [166, 206, 227];
  }
  if (rivers[i + 3] > 110) c = [255, 127, 127];
  if (c) { img.data[i] = c[0]; img.data[i + 1] = c[1]; img.data[i + 2] = c[2]; img.data[i + 3] = 255; }
}
ctx.putImageData(img, 0, 0);
```
